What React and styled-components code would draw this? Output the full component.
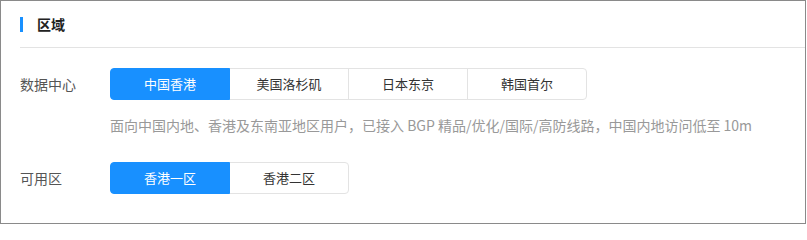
import React, { useState } from "react";
import styled, { createGlobalStyle } from "styled-components";

const GlobalStyle = createGlobalStyle`
  html, body { margin: 0; padding: 0; background: #fff; }
  body { font-family: "Noto Sans CJK SC", "Noto Sans", sans-serif; }
  * { box-sizing: border-box; }
`;

const Frame = styled.div`
  width: 806px;
  height: 224px;
  border: 1px solid #8a8a8a;
  background: #fff;
`;

const Header = styled.div`
  height: 46px;
  display: flex;
  align-items: center;
  padding-left: 19px;
`;

const Bar = styled.span`
  width: 3px;
  height: 15px;
  background: #1890ff;
`;

const Title = styled.h2`
  margin: 0 0 0 14px;
  font-size: 14px;
  line-height: 20px;
  font-weight: 700;
  color: #222;
`;

const Divider = styled.div`
  height: 1px;
  margin-left: 19px;
  background: #e3e3e3;
`;

const Body = styled.div`
  padding: 20px 0 0 19px;
`;

const Row = styled.div`
  display: flex;
  align-items: center;
  margin-top: ${(p) => p.$gap || 0}px;
`;

const Label = styled.div`
  width: 90px;
  font-size: 14px;
  line-height: 20px;
  color: #555;
`;

const Group = styled.div`
  display: flex;
`;

const Option = styled.button`
  width: 120px;
  height: 32px;
  padding: 0;
  margin-left: -1px;
  font-family: inherit;
  font-size: 13px;
  line-height: 20px;
  border: 1px solid ${(p) => (p.$active ? "#1890ff" : "#e3e3e3")};
  background: ${(p) => (p.$active ? "#1890ff" : "#fff")};
  color: ${(p) => (p.$active ? "#fff" : "#333")};
  position: relative;
  z-index: ${(p) => (p.$active ? 1 : 0)};
  cursor: pointer;
  &:first-child {
    margin-left: 0;
    border-radius: 4px 0 0 4px;
  }
  &:last-child {
    border-radius: 0 4px 4px 0;
  }
`;

const Hint = styled.p`
  margin: 15px 0 0 90px;
  font-size: 14px;
  line-height: 20px;
  color: #999;
`;

function Choice({ items }) {
  const [sel, setSel] = useState(0);
  return (
    <Group>
      {items.map((t, i) => (
        <Option key={t} $active={i === sel} onClick={() => setSel(i)}>
          {t}
        </Option>
      ))}
    </Group>
  );
}

export default function App() {
  return (
    <>
      <GlobalStyle />
      <Frame>
        <Header>
          <Bar />
          <Title>区域</Title>
        </Header>
        <Divider />
        <Body>
          <Row>
            <Label>数据中心</Label>
            <Choice items={["中国香港", "美国洛杉矶", "日本东京", "韩国首尔"]} />
          </Row>
          <Hint>
            面向中国内地、香港及东南亚地区用户，已接入 BGP 精品/优化/国际/高防线路，中国内地访问低至 10m
          </Hint>
          <Row $gap={27}>
            <Label>可用区</Label>
            <Choice items={["香港一区", "香港二区"]} />
          </Row>
        </Body>
      </Frame>
    </>
  );
}
